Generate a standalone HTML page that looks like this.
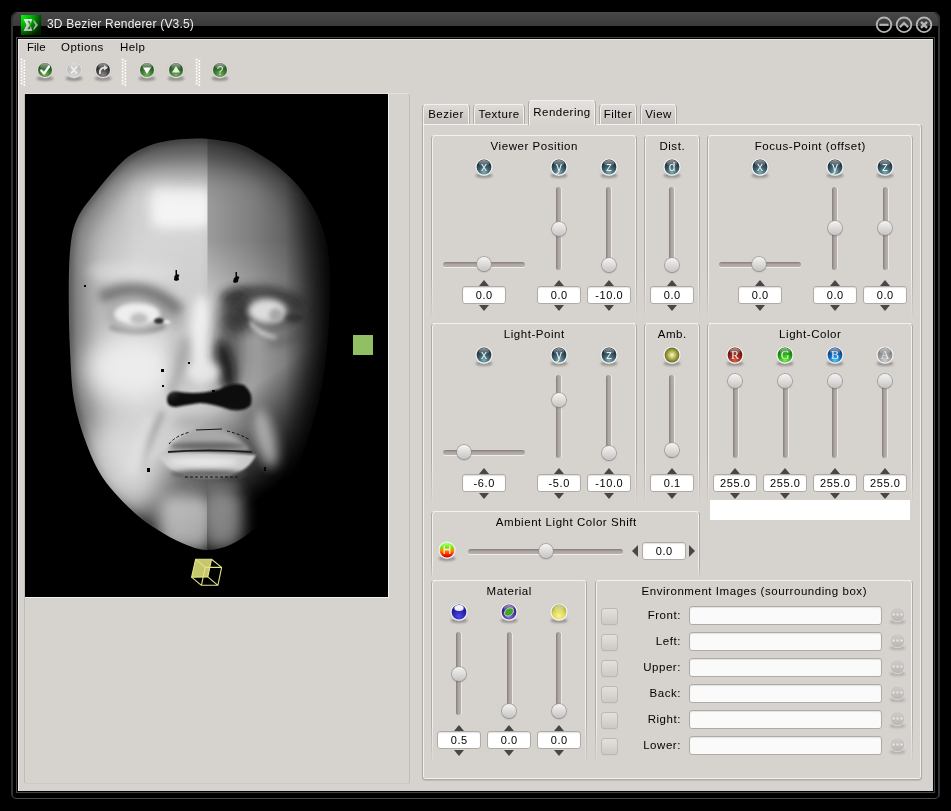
<!DOCTYPE html>
<html><head><meta charset="utf-8"><style>
html,body{margin:0;padding:0;}
body{width:951px;height:811px;background:#000;position:relative;overflow:hidden;font-family:"Liberation Sans",sans-serif;color:#000;}
div{box-sizing:border-box;}
.t{position:absolute;white-space:nowrap;will-change:transform;}
svg text{will-change:transform;}
.gtop{position:absolute;height:4px;border:1px solid #aeaaa6;border-top-color:#f2f1ef;border-bottom:none;border-radius:4px 4px 0 0;box-shadow:inset 1px 0 0 #f2f1ef, inset -1px 0 0 #f2f1ef;}
.gside{position:absolute;width:1px;}
.hgroove{position:absolute;height:5px;border-radius:3px;background:linear-gradient(#857d7a,#aea6a2 50%,#b8b0ac);box-shadow:0 1px 0 rgba(255,255,255,0.6);}
.vgroove{position:absolute;width:5px;border-radius:3px;background:linear-gradient(90deg,#857d7a,#aea6a2 50%,#b8b0ac);box-shadow:1px 0 0 rgba(255,255,255,0.5);}
.handle{position:absolute;width:14px;height:14px;border-radius:50%;background:linear-gradient(#f4f4f3,#c6c4c2);box-shadow:0 0 0 0.8px #9c9894, 0 1px 1.5px rgba(0,0,0,0.35);}
.aup{position:absolute;width:0;height:0;border-left:5.5px solid transparent;border-right:5.5px solid transparent;border-bottom:6px solid #474747;}
.adn{position:absolute;width:0;height:0;border-left:5.5px solid transparent;border-right:5.5px solid transparent;border-top:6px solid #474747;}
.spin{position:absolute;will-change:transform;background:#fff;border:1px solid #b0aba7;border-radius:3px;text-align:center;font-size:11px;letter-spacing:0.6px;text-indent:0.6px;color:#000;box-shadow:inset 0 1px 1px rgba(0,0,0,0.12);}
.tab{position:absolute;will-change:transform;border:1px solid #aeaaa6;border-top-color:#f2f1ef;border-bottom:none;border-radius:4px 4px 0 0;box-shadow:inset 1px 0 0 #f2f1ef, inset -1px 0 0 #f2f1ef;background:linear-gradient(#dbd8d5 10%,#c8c4c0 90%);font-size:11.5px;letter-spacing:0.5px;text-align:center;}
.chk{position:absolute;width:15px;height:15px;border-radius:3px;background:linear-gradient(#e2e0de,#cdc9c5);box-shadow:0 0 0 1px #bcb8b4, 0 1px 1px rgba(0,0,0,0.3);}
.le{position:absolute;background:#fafafa;border:1px solid #b0aba7;border-radius:3px;box-shadow:inset 0 1px 1px rgba(0,0,0,0.1);}
</style></head><body>

<svg width="0" height="0" style="position:absolute"><defs>
<filter id="shb" x="-50%" y="-100%" width="200%" height="300%"><feGaussianBlur stdDeviation="1"/></filter>
<radialGradient id="g_teal" cx="50%" cy="85%" r="75%"><stop offset="0" stop-color="#80b0ac"/><stop offset="0.45" stop-color="#406474"/><stop offset="1" stop-color="#16242e"/></radialGradient>
<radialGradient id="g_red" cx="50%" cy="85%" r="75%"><stop offset="0" stop-color="#e05a40"/><stop offset="0.5" stop-color="#a02818"/><stop offset="1" stop-color="#581008"/></radialGradient>
<radialGradient id="g_green" cx="50%" cy="85%" r="75%"><stop offset="0" stop-color="#80f050"/><stop offset="0.5" stop-color="#28b010"/><stop offset="1" stop-color="#0c6a06"/></radialGradient>
<radialGradient id="g_blue" cx="50%" cy="85%" r="75%"><stop offset="0" stop-color="#50c8f8"/><stop offset="0.5" stop-color="#1670c0"/><stop offset="1" stop-color="#0a3470"/></radialGradient>
<radialGradient id="g_gray" cx="50%" cy="85%" r="75%"><stop offset="0" stop-color="#cfcfcf"/><stop offset="0.5" stop-color="#9c9c9c"/><stop offset="1" stop-color="#777"/></radialGradient>
<radialGradient id="g_olive" cx="50%" cy="50%" r="55%"><stop offset="0" stop-color="#fafad0"/><stop offset="0.45" stop-color="#b8b850"/><stop offset="1" stop-color="#585a20"/></radialGradient>
<linearGradient id="g_hue" x1="0" y1="0" x2="0" y2="1"><stop offset="0" stop-color="#b0ffa0"/><stop offset="0.3" stop-color="#70f000"/><stop offset="0.55" stop-color="#ff8a00"/><stop offset="0.8" stop-color="#ff2000"/><stop offset="1" stop-color="#c00000"/></linearGradient>
<radialGradient id="g_mblue" cx="50%" cy="80%" r="70%"><stop offset="0" stop-color="#4a4ae8"/><stop offset="0.6" stop-color="#2a26b0"/><stop offset="1" stop-color="#16127a"/></radialGradient>
<radialGradient id="g_mpurple" cx="50%" cy="80%" r="70%"><stop offset="0" stop-color="#8a70d0"/><stop offset="0.6" stop-color="#4a30a0"/><stop offset="1" stop-color="#2a1870"/></radialGradient>
<radialGradient id="g_myellow" cx="50%" cy="75%" r="70%"><stop offset="0" stop-color="#fff490"/><stop offset="0.6" stop-color="#d8d858"/><stop offset="1" stop-color="#9a9a30"/></radialGradient>
<radialGradient id="g_tgreen" cx="50%" cy="85%" r="75%"><stop offset="0" stop-color="#78b060"/><stop offset="0.5" stop-color="#3e7a34"/><stop offset="1" stop-color="#1e4a1a"/></radialGradient>
<radialGradient id="g_tdis" cx="50%" cy="85%" r="75%"><stop offset="0" stop-color="#d8d6d4"/><stop offset="1" stop-color="#bab8b6"/></radialGradient>
<radialGradient id="g_tdark" cx="50%" cy="85%" r="75%"><stop offset="0" stop-color="#8a8a8a"/><stop offset="0.5" stop-color="#4a4a4a"/><stop offset="1" stop-color="#222"/></radialGradient>
<linearGradient id="g_btn" x1="0" y1="0" x2="0" y2="1"><stop offset="0" stop-color="#cfccc9"/><stop offset="1" stop-color="#b9b6b3"/></linearGradient>
<linearGradient id="g_hl" x1="0" y1="0" x2="0" y2="1"><stop offset="0" stop-color="#fff" stop-opacity="0.55"/><stop offset="1" stop-color="#fff" stop-opacity="0"/></linearGradient>
</defs></svg>
<div style="position:absolute;left:11px;top:12px;width:929px;height:787px;border:1px solid #4a4a4a;border-left:2px solid #333;border-right:2px solid #333;border-radius:6px 6px 5px 5px;background:#000;"></div>
<div style="position:absolute;left:13px;top:13px;width:925px;height:13px;background:linear-gradient(#474747,#3a3a3a);border-radius:5px 5px 0 0;"></div>
<svg style="position:absolute;left:21px;top:15px" width="20" height="20" viewBox="0 0 20 20">
<defs><radialGradient id="appg" cx="0%" cy="0%" r="120%"><stop offset="0" stop-color="#00ff00"/><stop offset="0.5" stop-color="#00a800"/><stop offset="1" stop-color="#001a00"/></radialGradient>
<linearGradient id="appw" x1="0" y1="0" x2="1" y2="1"><stop offset="0" stop-color="#f8f8f8"/><stop offset="1" stop-color="#a0a0a0"/></linearGradient></defs>
<rect width="20" height="20" fill="url(#appg)"/>
<path d="M2.5 4 L11 4 L11 6 L6.5 6 L9 10 L6.5 14 L11 14 L11 16 L2.5 16 L5.5 10 Z" fill="url(#appw)"/>
<path d="M8 4 L11.5 4 L9.5 10 L11.5 16 L8 16 L10 10 Z" fill="url(#appw)" opacity="0.8"/>
<path d="M12.5 4.5 L17 10 L12.5 15.5 L12.5 13 L14.5 10 L12.5 7 Z" fill="#c8c8c8" opacity="0.8"/>
</svg>
<div class="t" style="left:47px;top:17px;white-space:nowrap;font-size:12px;line-height:14px;letter-spacing:0.2px;color:#eeeeee;">3D Bezier Renderer (V3.5)</div>
<svg style="position:absolute;left:870px;top:12px" width="64" height="26" viewBox="870 12 64 26">
<g stroke="#b4b4b4" fill="none" stroke-width="1.8">
<circle cx="884" cy="24.8" r="7.3"/><circle cx="904" cy="24.8" r="7.3"/><circle cx="924" cy="24.8" r="7.3"/>
<path d="M879.5 24.8 L888.5 24.8" stroke-width="2.2"/>
<path d="M899.8 27.2 L904 23 L908.2 27.2" stroke-width="2.2"/>
<path d="M921 21.8 L927 27.8 M927 21.8 L921 27.8" stroke-width="2.4"/>
</g></svg>
<div style="position:absolute;left:16px;top:37px;width:919px;height:756px;border:1px solid #464646;"></div>
<div style="position:absolute;left:18px;top:39px;width:915px;height:752px;background:#d6d2ce;border-left:1px solid #eceae8;border-top:1px solid #eceae8;"></div>
<div class="t" style="left:26.5px;top:40px;white-space:nowrap;font-size:11.5px;line-height:14px;letter-spacing:0px;">File</div>
<div class="t" style="left:61px;top:40px;white-space:nowrap;font-size:11.5px;line-height:14px;letter-spacing:0.45px;">Options</div>
<div class="t" style="left:120px;top:40px;white-space:nowrap;font-size:11.5px;line-height:14px;letter-spacing:0.45px;">Help</div>
<svg style="position:absolute;left:20px;top:58px" width="6" height="28" viewBox="0 0 6 28"><g fill="#fff"><circle cx="1.6" cy="1.5" r="1"/><circle cx="4.3" cy="3" r="1"/><circle cx="1.6" cy="4.5" r="1"/><circle cx="4.3" cy="6" r="1"/><circle cx="1.6" cy="7.5" r="1"/><circle cx="4.3" cy="9" r="1"/><circle cx="1.6" cy="10.5" r="1"/><circle cx="4.3" cy="12" r="1"/><circle cx="1.6" cy="13.5" r="1"/><circle cx="4.3" cy="15" r="1"/><circle cx="1.6" cy="16.5" r="1"/><circle cx="4.3" cy="18" r="1"/><circle cx="1.6" cy="19.5" r="1"/><circle cx="4.3" cy="21" r="1"/><circle cx="1.6" cy="22.5" r="1"/><circle cx="4.3" cy="24" r="1"/><circle cx="1.6" cy="25.5" r="1"/><circle cx="4.3" cy="27" r="1"/></g></svg>
<svg style="position:absolute;left:121px;top:58px" width="6" height="28" viewBox="0 0 6 28"><g fill="#fff"><circle cx="1.6" cy="1.5" r="1"/><circle cx="4.3" cy="3" r="1"/><circle cx="1.6" cy="4.5" r="1"/><circle cx="4.3" cy="6" r="1"/><circle cx="1.6" cy="7.5" r="1"/><circle cx="4.3" cy="9" r="1"/><circle cx="1.6" cy="10.5" r="1"/><circle cx="4.3" cy="12" r="1"/><circle cx="1.6" cy="13.5" r="1"/><circle cx="4.3" cy="15" r="1"/><circle cx="1.6" cy="16.5" r="1"/><circle cx="4.3" cy="18" r="1"/><circle cx="1.6" cy="19.5" r="1"/><circle cx="4.3" cy="21" r="1"/><circle cx="1.6" cy="22.5" r="1"/><circle cx="4.3" cy="24" r="1"/><circle cx="1.6" cy="25.5" r="1"/><circle cx="4.3" cy="27" r="1"/></g></svg>
<svg style="position:absolute;left:195px;top:58px" width="6" height="28" viewBox="0 0 6 28"><g fill="#fff"><circle cx="1.6" cy="1.5" r="1"/><circle cx="4.3" cy="3" r="1"/><circle cx="1.6" cy="4.5" r="1"/><circle cx="4.3" cy="6" r="1"/><circle cx="1.6" cy="7.5" r="1"/><circle cx="4.3" cy="9" r="1"/><circle cx="1.6" cy="10.5" r="1"/><circle cx="4.3" cy="12" r="1"/><circle cx="1.6" cy="13.5" r="1"/><circle cx="4.3" cy="15" r="1"/><circle cx="1.6" cy="16.5" r="1"/><circle cx="4.3" cy="18" r="1"/><circle cx="1.6" cy="19.5" r="1"/><circle cx="4.3" cy="21" r="1"/><circle cx="1.6" cy="22.5" r="1"/><circle cx="4.3" cy="24" r="1"/><circle cx="1.6" cy="25.5" r="1"/><circle cx="4.3" cy="27" r="1"/></g></svg>
<svg style="position:absolute;left:32.3px;top:56.8px" width="26" height="28" viewBox="0 0 26 28"><ellipse cx="13.0" cy="21.5" rx="8.5" ry="2.6" fill="#000" opacity="0.3" filter="url(#shb)"/><circle cx="13.0" cy="13.0" r="8.3" fill="#e4e2e0" stroke="#bdb9b5" stroke-width="0.6" stroke-opacity="0.6"/><circle cx="13.0" cy="13.0" r="7" fill="url(#g_tgreen)"/><ellipse cx="13.0" cy="9.4" rx="5.0" ry="3.1" fill="url(#g_hl)"/><path d="M9.2 13.5 L12 16.5 L17 9.5" stroke="#fff" stroke-width="2.2" fill="none" stroke-linecap="round" stroke-linejoin="round"/></svg>
<svg style="position:absolute;left:61.3px;top:56.8px" width="26" height="28" viewBox="0 0 26 28"><ellipse cx="13.0" cy="21.5" rx="8.5" ry="2.6" fill="#000" opacity="0.3" filter="url(#shb)"/><circle cx="13.0" cy="13.0" r="8.3" fill="#e4e2e0" stroke="#bdb9b5" stroke-width="0.6" stroke-opacity="0.6"/><circle cx="13.0" cy="13.0" r="7" fill="url(#g_tdis)"/><ellipse cx="13.0" cy="9.4" rx="5.0" ry="3.1" fill="url(#g_hl)"/><path d="M10 9.5 L16 16.5 M16 9.5 L10 16.5" stroke="#f0f0f0" stroke-width="1.6" fill="none"/></svg>
<svg style="position:absolute;left:90.3px;top:56.8px" width="26" height="28" viewBox="0 0 26 28"><ellipse cx="13.0" cy="21.5" rx="8.5" ry="2.6" fill="#000" opacity="0.3" filter="url(#shb)"/><circle cx="13.0" cy="13.0" r="8.3" fill="#e4e2e0" stroke="#bdb9b5" stroke-width="0.6" stroke-opacity="0.6"/><circle cx="13.0" cy="13.0" r="7" fill="url(#g_tdark)"/><ellipse cx="13.0" cy="9.4" rx="5.0" ry="3.1" fill="url(#g_hl)"/><path d="M10 17 Q9 11 15 10.5" stroke="#e0e0e0" stroke-width="2" fill="none"/><path d="M14 8 L18 10.8 L14 13.5 Z" fill="#e0e0e0"/></svg>
<svg style="position:absolute;left:134.2px;top:56.8px" width="26" height="28" viewBox="0 0 26 28"><ellipse cx="13.0" cy="21.5" rx="8.5" ry="2.6" fill="#000" opacity="0.3" filter="url(#shb)"/><circle cx="13.0" cy="13.0" r="8.3" fill="#e4e2e0" stroke="#bdb9b5" stroke-width="0.6" stroke-opacity="0.6"/><circle cx="13.0" cy="13.0" r="7" fill="url(#g_tgreen)"/><ellipse cx="13.0" cy="9.4" rx="5.0" ry="3.1" fill="url(#g_hl)"/><path d="M9 10.5 L17 10.5 L13 17 Z" fill="#fff"/></svg>
<svg style="position:absolute;left:163.3px;top:56.8px" width="26" height="28" viewBox="0 0 26 28"><ellipse cx="13.0" cy="21.5" rx="8.5" ry="2.6" fill="#000" opacity="0.3" filter="url(#shb)"/><circle cx="13.0" cy="13.0" r="8.3" fill="#e4e2e0" stroke="#bdb9b5" stroke-width="0.6" stroke-opacity="0.6"/><circle cx="13.0" cy="13.0" r="7" fill="url(#g_tgreen)"/><ellipse cx="13.0" cy="9.4" rx="5.0" ry="3.1" fill="url(#g_hl)"/><path d="M9 15.5 L17 15.5 L13 9 Z" fill="#e8f0e8"/></svg>
<svg style="position:absolute;left:207.0px;top:56.8px" width="26" height="28" viewBox="0 0 26 28"><ellipse cx="13.0" cy="21.5" rx="8.5" ry="2.6" fill="#000" opacity="0.3" filter="url(#shb)"/><circle cx="13.0" cy="13.0" r="8.3" fill="#e4e2e0" stroke="#bdb9b5" stroke-width="0.6" stroke-opacity="0.6"/><circle cx="13.0" cy="13.0" r="7" fill="url(#g_tgreen)"/><ellipse cx="13.0" cy="9.4" rx="5.0" ry="3.1" fill="url(#g_hl)"/><text x="13" y="17.5" text-anchor="middle" font-family="Liberation Sans" font-size="12" fill="#d8e8d0">?</text></svg>
<div style="position:absolute;left:24px;top:93px;width:386px;height:691px;border:1px solid #bfbbb7;border-top-color:#e4e2e0;border-bottom-color:#cdc9c5;border-radius:3px;"></div>
<svg style="position:absolute;left:25px;top:94px" width="363" height="503" viewBox="25 94 363 503">
<defs>
<mask id="hm" maskUnits="userSpaceOnUse" x="0" y="0" width="420" height="700"><path d="M208.0,139.0 C216.2,139.9 230.5,141.5 239.0,144.0 C247.5,146.5 252.3,150.1 259.0,154.0 C265.7,157.9 272.3,162.0 279.0,167.5 C285.7,173.0 293.2,180.1 299.0,187.0 C304.8,193.9 309.8,201.3 314.0,209.0 C318.2,216.7 321.5,224.5 324.0,233.0 C326.5,241.5 328.0,249.7 329.0,260.0 C330.0,270.3 330.2,282.5 330.0,295.0 C329.8,307.5 329.2,320.8 328.0,335.0 C326.8,349.2 325.5,365.5 323.0,380.0 C320.5,394.5 316.8,408.7 313.0,422.0 C309.2,435.3 305.2,447.8 300.0,460.0 C294.8,472.2 289.0,484.2 282.0,495.0 C275.0,505.8 266.3,516.8 258.0,525.0 C249.7,533.2 240.7,539.8 232.0,544.0 C223.3,548.2 214.3,550.2 206.0,550.0 C197.7,549.8 190.0,546.3 182.0,543.0 C174.0,539.7 166.1,535.2 158.0,530.0 C149.9,524.8 142.6,520.4 133.6,512.0 C124.6,503.6 111.8,490.8 104.0,479.5 C96.2,468.2 91.5,457.2 86.5,444.0 C81.5,430.8 76.8,415.7 74.0,400.0 C71.2,384.3 70.9,366.7 70.0,350.0 C69.1,333.3 68.8,317.0 68.8,300.0 C68.8,283.0 68.8,261.7 70.3,248.0 C71.8,234.3 72.9,227.8 77.6,218.0 C82.3,208.2 90.4,198.8 98.3,189.0 C106.2,179.2 116.5,166.7 124.8,159.5 C133.1,152.3 140.8,149.2 148.3,146.0 C155.8,142.8 163.1,141.7 170.0,140.5 C176.9,139.3 183.7,139.1 190.0,138.8 C196.3,138.6 199.8,138.1 208.0,139.0 Z" fill="#fff"/></mask>
<clipPath id="lh"><rect x="0" y="0" width="207.5" height="811"/></clipPath>
<clipPath id="rh"><rect x="207.5" y="0" width="400" height="811"/></clipPath>
<filter id="b1" filterUnits="userSpaceOnUse" x="0" y="0" width="420" height="700"><feGaussianBlur stdDeviation="1"/></filter><filter id="b2" filterUnits="userSpaceOnUse" x="0" y="0" width="420" height="700"><feGaussianBlur stdDeviation="2"/></filter><filter id="b3" filterUnits="userSpaceOnUse" x="0" y="0" width="420" height="700"><feGaussianBlur stdDeviation="3"/></filter><filter id="b4" filterUnits="userSpaceOnUse" x="0" y="0" width="420" height="700"><feGaussianBlur stdDeviation="4"/></filter><filter id="b5" filterUnits="userSpaceOnUse" x="0" y="0" width="420" height="700"><feGaussianBlur stdDeviation="5"/></filter><filter id="b6" filterUnits="userSpaceOnUse" x="0" y="0" width="420" height="700"><feGaussianBlur stdDeviation="6"/></filter><filter id="b8" filterUnits="userSpaceOnUse" x="0" y="0" width="420" height="700"><feGaussianBlur stdDeviation="8"/></filter><filter id="b12" filterUnits="userSpaceOnUse" x="0" y="0" width="420" height="700"><feGaussianBlur stdDeviation="12"/></filter><filter id="b16" filterUnits="userSpaceOnUse" x="0" y="0" width="420" height="700"><feGaussianBlur stdDeviation="16"/></filter>
<linearGradient id="gh" gradientUnits="userSpaceOnUse" x1="70" y1="0" x2="330" y2="0">
<stop offset="0" stop-color="#b0b0b0"/><stop offset="0.25" stop-color="#d2d2d2"/><stop offset="0.5" stop-color="#cdcdcd"/><stop offset="0.7" stop-color="#a2a2a2"/><stop offset="0.88" stop-color="#707070"/><stop offset="1" stop-color="#3c3c3c"/></linearGradient>
<linearGradient id="fl" gradientUnits="userSpaceOnUse" x1="0" y1="240" x2="0" y2="300">
<stop offset="0" stop-color="#fff" stop-opacity="0.12"/><stop offset="1" stop-color="#fff" stop-opacity="0"/></linearGradient>
<linearGradient id="fr" gradientUnits="userSpaceOnUse" x1="0" y1="240" x2="0" y2="300">
<stop offset="0" stop-color="#000" stop-opacity="0.22"/><stop offset="1" stop-color="#000" stop-opacity="0"/></linearGradient>
<linearGradient id="cl" gradientUnits="userSpaceOnUse" x1="0" y1="482" x2="0" y2="510">
<stop offset="0" stop-color="#fff" stop-opacity="0"/><stop offset="1" stop-color="#fff" stop-opacity="0.12"/></linearGradient>
<linearGradient id="cr" gradientUnits="userSpaceOnUse" x1="0" y1="482" x2="0" y2="510">
<stop offset="0" stop-color="#000" stop-opacity="0"/><stop offset="1" stop-color="#000" stop-opacity="0.12"/></linearGradient>
<linearGradient id="redge" gradientUnits="userSpaceOnUse" x1="285" y1="0" x2="332" y2="0">
<stop offset="0" stop-color="#000" stop-opacity="0"/><stop offset="1" stop-color="#000" stop-opacity="0.75"/></linearGradient>
<linearGradient id="rdark" gradientUnits="userSpaceOnUse" x1="240" y1="395" x2="295" y2="475">
<stop offset="0" stop-color="#000" stop-opacity="0"/><stop offset="0.45" stop-color="#000" stop-opacity="0.5"/><stop offset="1" stop-color="#000" stop-opacity="1"/></linearGradient>
</defs>
<rect x="25" y="94" width="363" height="503" fill="#000"/>
<g mask="url(#hm)">
 <rect x="25" y="94" width="363" height="503" fill="url(#gh)"/>
 <!-- forehead split -->
 <g clip-path="url(#lh)"><rect x="25" y="94" width="363" height="210" fill="url(#fl)"/>
   <rect x="150" y="186" width="62" height="42" rx="10" fill="#f8f8f8" filter="url(#b6)" opacity="0.9"/>
   <rect x="25" y="480" width="363" height="120" fill="url(#cl)"/>
 </g>
 <g clip-path="url(#rh)"><rect x="25" y="94" width="363" height="210" fill="url(#fr)"/>
   <rect x="25" y="480" width="363" height="120" fill="url(#cr)"/>
 </g>
 <rect x="25" y="94" width="363" height="503" fill="url(#rdark)"/>
 <rect x="25" y="180" width="363" height="300" fill="url(#redge)"/>
 <path d="M208.0,139.0 C216.2,139.9 230.5,141.5 239.0,144.0 C247.5,146.5 252.3,150.1 259.0,154.0 C265.7,157.9 272.3,162.0 279.0,167.5 C285.7,173.0 293.2,180.1 299.0,187.0 C304.8,193.9 309.8,201.3 314.0,209.0 C318.2,216.7 321.5,224.5 324.0,233.0 C326.5,241.5 328.0,249.7 329.0,260.0 C330.0,270.3 330.2,282.5 330.0,295.0 C329.8,307.5 329.2,320.8 328.0,335.0 C326.8,349.2 325.5,365.5 323.0,380.0 C320.5,394.5 316.8,408.7 313.0,422.0 C309.2,435.3 305.2,447.8 300.0,460.0 C294.8,472.2 289.0,484.2 282.0,495.0 C275.0,505.8 266.3,516.8 258.0,525.0 C249.7,533.2 240.7,539.8 232.0,544.0 C223.3,548.2 214.3,550.2 206.0,550.0 C197.7,549.8 190.0,546.3 182.0,543.0 C174.0,539.7 166.1,535.2 158.0,530.0 C149.9,524.8 142.6,520.4 133.6,512.0 C124.6,503.6 111.8,490.8 104.0,479.5 C96.2,468.2 91.5,457.2 86.5,444.0 C81.5,430.8 76.8,415.7 74.0,400.0 C71.2,384.3 70.9,366.7 70.0,350.0 C69.1,333.3 68.8,317.0 68.8,300.0 C68.8,283.0 68.8,261.7 70.3,248.0 C71.8,234.3 72.9,227.8 77.6,218.0 C82.3,208.2 90.4,198.8 98.3,189.0 C106.2,179.2 116.5,166.7 124.8,159.5 C133.1,152.3 140.8,149.2 148.3,146.0 C155.8,142.8 163.1,141.7 170.0,140.5 C176.9,139.3 183.7,139.1 190.0,138.8 C196.3,138.6 199.8,138.1 208.0,139.0 Z" stroke="#000" stroke-width="30" fill="none" filter="url(#b12)" opacity="0.38"/>
 <ellipse cx="195" cy="138" rx="120" ry="34" fill="#000" filter="url(#b16)" opacity="0.42"/>
 <ellipse cx="110" cy="200" rx="30" ry="50" fill="#000" filter="url(#b16)" opacity="0.08"/>
 <path d="M208.0,139.0 C216.2,139.9 230.5,141.5 239.0,144.0 C247.5,146.5 252.3,150.1 259.0,154.0 C265.7,157.9 272.3,162.0 279.0,167.5 C285.7,173.0 293.2,180.1 299.0,187.0 C304.8,193.9 309.8,201.3 314.0,209.0 C318.2,216.7 321.5,224.5 324.0,233.0 C326.5,241.5 328.0,249.7 329.0,260.0 C330.0,270.3 330.2,282.5 330.0,295.0 C329.8,307.5 329.2,320.8 328.0,335.0 C326.8,349.2 325.5,365.5 323.0,380.0 C320.5,394.5 316.8,408.7 313.0,422.0 C309.2,435.3 305.2,447.8 300.0,460.0 C294.8,472.2 289.0,484.2 282.0,495.0 C275.0,505.8 266.3,516.8 258.0,525.0 C249.7,533.2 240.7,539.8 232.0,544.0 C223.3,548.2 214.3,550.2 206.0,550.0 C197.7,549.8 190.0,546.3 182.0,543.0 C174.0,539.7 166.1,535.2 158.0,530.0 C149.9,524.8 142.6,520.4 133.6,512.0 C124.6,503.6 111.8,490.8 104.0,479.5 C96.2,468.2 91.5,457.2 86.5,444.0 C81.5,430.8 76.8,415.7 74.0,400.0 C71.2,384.3 70.9,366.7 70.0,350.0 C69.1,333.3 68.8,317.0 68.8,300.0 C68.8,283.0 68.8,261.7 70.3,248.0 C71.8,234.3 72.9,227.8 77.6,218.0 C82.3,208.2 90.4,198.8 98.3,189.0 C106.2,179.2 116.5,166.7 124.8,159.5 C133.1,152.3 140.8,149.2 148.3,146.0 C155.8,142.8 163.1,141.7 170.0,140.5 C176.9,139.3 183.7,139.1 190.0,138.8 C196.3,138.6 199.8,138.1 208.0,139.0 Z" stroke="#000" stroke-width="6" fill="none" filter="url(#b3)" opacity="0.35"/>
 <!-- brow ridge bright -->
 <ellipse cx="132" cy="272" rx="45" ry="9" fill="#e2e2e2" filter="url(#b6)" opacity="0.6"/>
 <!-- brow / socket shadow -->
 <path d="M100 298 Q145 276 180 312" stroke="#5a5a5a" stroke-width="13" fill="none" filter="url(#b5)" opacity="0.75"/>
 <path d="M222 300 Q262 280 305 306" stroke="#2a2a2a" stroke-width="12" fill="none" filter="url(#b5)" opacity="0.7"/>
 <ellipse cx="238" cy="312" rx="17" ry="22" fill="#121212" filter="url(#b6)" opacity="0.65"/>
 <ellipse cx="140" cy="314" rx="34" ry="17" fill="#6a6a6a" filter="url(#b6)" opacity="0.35"/>
 <ellipse cx="270" cy="312" rx="34" ry="18" fill="#1a1a1a" filter="url(#b6)" opacity="0.4"/>
 <!-- left eye -->
 <ellipse cx="137" cy="314" rx="23" ry="11" fill="#eeeeee" filter="url(#b2)"/>
 <ellipse cx="139" cy="319" rx="9" ry="6" fill="#bcbcbc" filter="url(#b2)"/>
 <ellipse cx="159" cy="321" rx="5" ry="3" fill="#1e1e1e" filter="url(#b1)" opacity="0.9"/>
 <ellipse cx="167" cy="322" rx="3.5" ry="2" fill="#f2f2f2" filter="url(#b1)"/>
 <path d="M110 327 Q138 338 165 326" stroke="#7a7a7a" stroke-width="5" fill="none" filter="url(#b2)" opacity="0.8"/>
 <ellipse cx="177" cy="320" rx="6" ry="12" fill="#8a8a8a" filter="url(#b6)" opacity="0.5"/>
 <!-- bright cheek left -->
 <ellipse cx="130" cy="368" rx="45" ry="32" fill="#f0f0f0" filter="url(#b12)" opacity="0.9"/>
 <!-- right eye -->
 <ellipse cx="267" cy="311" rx="19" ry="12" fill="#dcdcdc" filter="url(#b3)"/>
 <ellipse cx="276" cy="315" rx="7" ry="7" fill="#a8a8a8" filter="url(#b2)"/>
 <ellipse cx="295" cy="318" rx="10" ry="4" fill="#2a2a2a" filter="url(#b2)" opacity="0.7"/>
 <path d="M250 322 Q258 334 276 338" stroke="#dcdcdc" stroke-width="4" fill="none" filter="url(#b2)" opacity="0.85"/>
 <path d="M268 342 Q288 345 305 332" stroke="#3a3a3a" stroke-width="6" fill="none" filter="url(#b4)" opacity="0.45"/>
 <!-- nose bridge -->
 <ellipse cx="201" cy="335" rx="10" ry="40" fill="#f0f0f0" filter="url(#b4)" opacity="0.95"/>
 <ellipse cx="229" cy="352" rx="14" ry="40" fill="#1a1a1a" filter="url(#b8)" opacity="0.55"/>
 <ellipse cx="226" cy="366" rx="8" ry="26" transform="rotate(-12 226 366)" fill="#0a0a0a" filter="url(#b4)" opacity="0.8"/>
 <ellipse cx="180" cy="362" rx="8" ry="26" fill="#8a8a8a" filter="url(#b8)" opacity="0.45"/>
 <!-- nose tip -->
 <ellipse cx="203" cy="372" rx="17" ry="11" fill="#e8e8e8" filter="url(#b4)" opacity="0.9"/>
 <ellipse cx="180" cy="385" rx="12" ry="9" fill="#c8c8c8" filter="url(#b3)" opacity="0.6"/>
 <!-- nostrils -->
 <path d="M167 398 Q169 389 180 392 Q200 395 220 389 Q232 382 244 385 Q254 393 251 405 Q246 412 230 410 Q214 404 200 403 Q186 405 176 407 Q166 407 167 398 Z" fill="#101010" filter="url(#b1)"/>
 <path d="M186 338 Q182 370 169 396" stroke="#8c8c8c" stroke-width="6" fill="none" filter="url(#b4)" opacity="0.6"/>
 
 <ellipse cx="205" cy="418" rx="32" ry="6" fill="#c4c4c4" filter="url(#b4)" opacity="0.4"/>
 <ellipse cx="210" cy="424" rx="38" ry="8" fill="#8a8a8a" filter="url(#b6)" opacity="0.45"/>
 <!-- nasolabial folds -->
 <path d="M163 412 Q148 440 142 472" stroke="#8a8a8a" stroke-width="5" fill="none" filter="url(#b3)" opacity="0.7"/>
 <path d="M150 416 Q136 445 131 472" stroke="#f0f0f0" stroke-width="5" fill="none" filter="url(#b4)" opacity="0.6"/>
 <path d="M252 412 Q264 440 270 470" stroke="#2a2a2a" stroke-width="7" fill="none" filter="url(#b4)" opacity="0.5"/>
 <!-- upper lip -->
 <path d="M168 451 Q184 428 208 428 Q232 428 251 451 Z" fill="#a8a8a8" filter="url(#b2)"/>
 <ellipse cx="208" cy="446" rx="38" ry="4" fill="#5a5a5a" filter="url(#b2)" opacity="0.8"/>
 <path d="M168 452 Q208 449 252 452" stroke="#1a1a1a" stroke-width="2" fill="none"/>
 <!-- lower lip -->
 <path d="M158 455 Q180 453 208 453 Q236 453 256 455 Q246 478 208 478 Q170 478 158 455 Z" fill="#cacaca" filter="url(#b1)"/>
 <ellipse cx="203" cy="462" rx="36" ry="5" fill="#ececec" filter="url(#b3)" opacity="0.9"/>
 <ellipse cx="208" cy="474" rx="38" ry="4" fill="#505050" filter="url(#b2)" opacity="0.8"/>
 <ellipse cx="208" cy="485" rx="34" ry="6" fill="#6a6a6a" filter="url(#b4)" opacity="0.55"/>
 <ellipse cx="122" cy="468" rx="30" ry="48" transform="rotate(-30 122 468)" fill="#e2e2e2" filter="url(#b12)" opacity="0.75"/>

 <ellipse cx="265" cy="438" rx="10" ry="30" transform="rotate(-15 265 438)" fill="#d0d0d0" filter="url(#b6)" opacity="0.75"/>
 <ellipse cx="222" cy="515" rx="16" ry="22" fill="#8a8a8a" filter="url(#b8)" opacity="0.5"/>
 <g clip-path="url(#lh)"><rect x="158" y="494" width="56" height="58" rx="16" fill="#e0e0e0" filter="url(#b8)" opacity="0.75"/></g>
 <g clip-path="url(#rh)"><rect x="200" y="488" width="42" height="62" rx="16" fill="#959595" filter="url(#b8)" opacity="0.8"/></g>
</g>
<g fill="#050505">
 <path d="M175.5,270 L177,270 L177,274 L179.5,275 L178.5,277 L179,280 L176,281 L174,280 L174.5,276 L175.5,275 Z"/>
 <path d="M235.5,272 L237,272 L237,276 L239.5,277 L238.5,279 L238,282 L235,283 L233,282 L234,278 L235.5,277 Z"/>
 <rect x="84" y="285" width="2" height="2"/>
 <rect x="161" y="369" width="3" height="3"/>
 <rect x="188" y="362" width="2" height="2"/>
 <rect x="147" y="468" width="3" height="4"/>
 <rect x="264" y="467" width="2" height="4"/>
 <rect x="212" y="390" width="3" height="2"/>
 <rect x="162" y="385" width="2" height="2"/>
</g>
<g stroke="#101010" stroke-width="1" fill="none" stroke-dasharray="3 2">
 <path d="M169 444 Q175 436 190 432"/>
 <path d="M227 431 Q240 434 250 440"/>
 <path d="M185 477 L240 477"/>
</g>
<path d="M196 430 L222 429" stroke="#151515" stroke-width="1.2"/>
<rect x="353" y="335" width="20" height="20" fill="#90c063"/>
<g stroke="#e4e488" stroke-width="1.1" fill="none" stroke-linejoin="round">
<path d="M195.6,559.3 L211.5,559.3 L207.8,576.9 L191.6,577.2 Z" fill="#c6c66c"/>
<path d="M195.6,559.3 L205.2,567.4 L221.6,567.4 L211.5,559.3 M221.6,567.4 L217.9,585.3 L201.4,585.3 L191.6,577.2 M205.2,567.4 L201.4,585.3 M207.8,576.9 L217.9,585.3"/>
</g>
</svg>
<div style="position:absolute;left:388px;top:94px;width:1px;height:503px;background:#f2f1ef;"></div>
<div style="position:absolute;left:25px;top:597px;width:364px;height:1px;background:#f2f1ef;"></div>
<div style="position:absolute;left:422px;top:124px;width:500px;height:656px;border:1px solid #aeaaa6;border-top-color:#f2f1ef;border-radius:0 4px 4px 4px;box-shadow:inset 1px 0 0 #f2f1ef, inset -1px 0 0 #f2f1ef, inset 0 -1px 0 #f2f1ef, 0 1px 1px rgba(0,0,0,0.12);"></div>
<div class="tab" style="left:422px;top:104px;width:48px;height:20px;line-height:18px;">Bezier</div>
<div class="tab" style="left:473px;top:104px;width:52px;height:20px;line-height:18px;">Texture</div>
<div class="tab" style="left:528px;top:100px;width:68px;height:25px;background:linear-gradient(#e4e1de,#d6d2ce);line-height:22px;">Rendering</div>
<div class="tab" style="left:599px;top:104px;width:38px;height:20px;line-height:18px;">Filter</div>
<div class="tab" style="left:640px;top:104px;width:37px;height:20px;line-height:18px;">View</div>
<div class="gtop" style="left:431px;top:135px;width:206px;"></div>
<div class="gside" style="left:431px;top:139px;height:177px;background:linear-gradient(#aeaaa6 136px, rgba(174,170,166,0) 181px);"></div>
<div class="gside" style="left:432px;top:139px;height:177px;background:linear-gradient(#f2f1ef 136px, rgba(242,241,239,0) 181px);"></div>
<div class="gside" style="left:635px;top:139px;height:177px;background:linear-gradient(#f2f1ef 136px, rgba(242,241,239,0) 181px);"></div>
<div class="gside" style="left:636px;top:139px;height:177px;background:linear-gradient(#aeaaa6 136px, rgba(174,170,166,0) 181px);"></div>
<div class="t" style="left:384.0px;top:139px;width:300px;text-align:center;font-size:11.5px;line-height:14px;letter-spacing:0.55px;text-indent:0.55px;">Viewer Position</div>
<div class="gtop" style="left:644px;top:135px;width:56px;"></div>
<div class="gside" style="left:644px;top:139px;height:177px;background:linear-gradient(#aeaaa6 136px, rgba(174,170,166,0) 181px);"></div>
<div class="gside" style="left:645px;top:139px;height:177px;background:linear-gradient(#f2f1ef 136px, rgba(242,241,239,0) 181px);"></div>
<div class="gside" style="left:698px;top:139px;height:177px;background:linear-gradient(#f2f1ef 136px, rgba(242,241,239,0) 181px);"></div>
<div class="gside" style="left:699px;top:139px;height:177px;background:linear-gradient(#aeaaa6 136px, rgba(174,170,166,0) 181px);"></div>
<div class="t" style="left:522.0px;top:139px;width:300px;text-align:center;font-size:11.5px;line-height:14px;letter-spacing:0.55px;text-indent:0.55px;">Dist.</div>
<div class="gtop" style="left:707px;top:135px;width:206px;"></div>
<div class="gside" style="left:707px;top:139px;height:177px;background:linear-gradient(#aeaaa6 136px, rgba(174,170,166,0) 181px);"></div>
<div class="gside" style="left:708px;top:139px;height:177px;background:linear-gradient(#f2f1ef 136px, rgba(242,241,239,0) 181px);"></div>
<div class="gside" style="left:911px;top:139px;height:177px;background:linear-gradient(#f2f1ef 136px, rgba(242,241,239,0) 181px);"></div>
<div class="gside" style="left:912px;top:139px;height:177px;background:linear-gradient(#aeaaa6 136px, rgba(174,170,166,0) 181px);"></div>
<div class="t" style="left:660.0px;top:139px;width:300px;text-align:center;font-size:11.5px;line-height:14px;letter-spacing:0.55px;text-indent:0.55px;">Focus-Point (offset)</div>
<div class="gtop" style="left:431px;top:323px;width:206px;"></div>
<div class="gside" style="left:431px;top:327px;height:175px;background:linear-gradient(#aeaaa6 134px, rgba(174,170,166,0) 179px);"></div>
<div class="gside" style="left:432px;top:327px;height:175px;background:linear-gradient(#f2f1ef 134px, rgba(242,241,239,0) 179px);"></div>
<div class="gside" style="left:635px;top:327px;height:175px;background:linear-gradient(#f2f1ef 134px, rgba(242,241,239,0) 179px);"></div>
<div class="gside" style="left:636px;top:327px;height:175px;background:linear-gradient(#aeaaa6 134px, rgba(174,170,166,0) 179px);"></div>
<div class="t" style="left:384.0px;top:327px;width:300px;text-align:center;font-size:11.5px;line-height:14px;letter-spacing:0.55px;text-indent:0.55px;">Light-Point</div>
<div class="gtop" style="left:644px;top:323px;width:56px;"></div>
<div class="gside" style="left:644px;top:327px;height:175px;background:linear-gradient(#aeaaa6 134px, rgba(174,170,166,0) 179px);"></div>
<div class="gside" style="left:645px;top:327px;height:175px;background:linear-gradient(#f2f1ef 134px, rgba(242,241,239,0) 179px);"></div>
<div class="gside" style="left:698px;top:327px;height:175px;background:linear-gradient(#f2f1ef 134px, rgba(242,241,239,0) 179px);"></div>
<div class="gside" style="left:699px;top:327px;height:175px;background:linear-gradient(#aeaaa6 134px, rgba(174,170,166,0) 179px);"></div>
<div class="t" style="left:522.0px;top:327px;width:300px;text-align:center;font-size:11.5px;line-height:14px;letter-spacing:0.55px;text-indent:0.55px;">Amb.</div>
<div class="gtop" style="left:707px;top:323px;width:206px;"></div>
<div class="gside" style="left:707px;top:327px;height:175px;background:linear-gradient(#aeaaa6 134px, rgba(174,170,166,0) 179px);"></div>
<div class="gside" style="left:708px;top:327px;height:175px;background:linear-gradient(#f2f1ef 134px, rgba(242,241,239,0) 179px);"></div>
<div class="gside" style="left:911px;top:327px;height:175px;background:linear-gradient(#f2f1ef 134px, rgba(242,241,239,0) 179px);"></div>
<div class="gside" style="left:912px;top:327px;height:175px;background:linear-gradient(#aeaaa6 134px, rgba(174,170,166,0) 179px);"></div>
<div class="t" style="left:660.0px;top:327px;width:300px;text-align:center;font-size:11.5px;line-height:14px;letter-spacing:0.55px;text-indent:0.55px;">Light-Color</div>
<div class="gtop" style="left:431px;top:511px;width:269px;"></div>
<div class="gside" style="left:431px;top:515px;height:61px;background:linear-gradient(#aeaaa6 49px, rgba(174,170,166,0) 65px);"></div>
<div class="gside" style="left:432px;top:515px;height:61px;background:linear-gradient(#f2f1ef 49px, rgba(242,241,239,0) 65px);"></div>
<div class="gside" style="left:698px;top:515px;height:61px;background:linear-gradient(#f2f1ef 49px, rgba(242,241,239,0) 65px);"></div>
<div class="gside" style="left:699px;top:515px;height:61px;background:linear-gradient(#aeaaa6 49px, rgba(174,170,166,0) 65px);"></div>
<div class="t" style="left:415.5px;top:515px;width:300px;text-align:center;font-size:11.5px;line-height:14px;letter-spacing:0.55px;text-indent:0.55px;">Ambient Light Color Shift</div>
<div class="gtop" style="left:431px;top:580px;width:156px;"></div>
<div class="gside" style="left:431px;top:584px;height:178px;background:linear-gradient(#aeaaa6 136px, rgba(174,170,166,0) 182px);"></div>
<div class="gside" style="left:432px;top:584px;height:178px;background:linear-gradient(#f2f1ef 136px, rgba(242,241,239,0) 182px);"></div>
<div class="gside" style="left:585px;top:584px;height:178px;background:linear-gradient(#f2f1ef 136px, rgba(242,241,239,0) 182px);"></div>
<div class="gside" style="left:586px;top:584px;height:178px;background:linear-gradient(#aeaaa6 136px, rgba(174,170,166,0) 182px);"></div>
<div class="t" style="left:359.0px;top:584px;width:300px;text-align:center;font-size:11.5px;line-height:14px;letter-spacing:0.55px;text-indent:0.55px;">Material</div>
<div class="gtop" style="left:595px;top:580px;width:318px;"></div>
<div class="gside" style="left:595px;top:584px;height:178px;background:linear-gradient(#aeaaa6 136px, rgba(174,170,166,0) 182px);"></div>
<div class="gside" style="left:596px;top:584px;height:178px;background:linear-gradient(#f2f1ef 136px, rgba(242,241,239,0) 182px);"></div>
<div class="gside" style="left:911px;top:584px;height:178px;background:linear-gradient(#f2f1ef 136px, rgba(242,241,239,0) 182px);"></div>
<div class="gside" style="left:912px;top:584px;height:178px;background:linear-gradient(#aeaaa6 136px, rgba(174,170,166,0) 182px);"></div>
<div class="t" style="left:604.0px;top:584px;width:300px;text-align:center;font-size:11.5px;line-height:14px;letter-spacing:0.55px;text-indent:0.55px;">Environment Images (sourrounding box)</div>
<svg style="position:absolute;left:471.0px;top:154.0px" width="26" height="28" viewBox="0 0 26 28"><ellipse cx="13.0" cy="21.5" rx="8.5" ry="2.6" fill="#000" opacity="0.3" filter="url(#shb)"/><circle cx="13.0" cy="13.0" r="9" fill="#f2f2f2" stroke="#bdb9b5" stroke-width="0.6" stroke-opacity="0.6"/><circle cx="13.0" cy="13.0" r="7.4" fill="url(#g_teal)"/><ellipse cx="13.0" cy="9.4" rx="5.3" ry="3.3" fill="url(#g_hl)"/><text x="13.0" y="17.2" text-anchor="middle" font-family="Liberation Sans" font-size="12" fill="#e8f0f0">x</text></svg>
<svg style="position:absolute;left:546.0px;top:154.0px" width="26" height="28" viewBox="0 0 26 28"><ellipse cx="13.0" cy="21.5" rx="8.5" ry="2.6" fill="#000" opacity="0.3" filter="url(#shb)"/><circle cx="13.0" cy="13.0" r="9" fill="#f2f2f2" stroke="#bdb9b5" stroke-width="0.6" stroke-opacity="0.6"/><circle cx="13.0" cy="13.0" r="7.4" fill="url(#g_teal)"/><ellipse cx="13.0" cy="9.4" rx="5.3" ry="3.3" fill="url(#g_hl)"/><text x="13.0" y="17.2" text-anchor="middle" font-family="Liberation Sans" font-size="12" fill="#e8f0f0">y</text></svg>
<svg style="position:absolute;left:596.0px;top:154.0px" width="26" height="28" viewBox="0 0 26 28"><ellipse cx="13.0" cy="21.5" rx="8.5" ry="2.6" fill="#000" opacity="0.3" filter="url(#shb)"/><circle cx="13.0" cy="13.0" r="9" fill="#f2f2f2" stroke="#bdb9b5" stroke-width="0.6" stroke-opacity="0.6"/><circle cx="13.0" cy="13.0" r="7.4" fill="url(#g_teal)"/><ellipse cx="13.0" cy="9.4" rx="5.3" ry="3.3" fill="url(#g_hl)"/><text x="13.0" y="17.2" text-anchor="middle" font-family="Liberation Sans" font-size="12" fill="#e8f0f0">z</text></svg>
<div class="hgroove" style="left:443px;top:261.8px;width:82px"></div>
<div class="handle" style="left:476.5px;top:257.3px"></div>
<div class="vgroove" style="left:556.0px;top:187px;height:83px"></div>
<div class="handle" style="left:551.5px;top:221.5px"></div>
<div class="vgroove" style="left:606.0px;top:187px;height:83px"></div>
<div class="handle" style="left:601.5px;top:258px"></div>
<div class="aup" style="left:478.5px;top:280px"></div>
<div class="adn" style="left:478.5px;top:305px"></div>
<div class="spin" style="left:462px;top:286px;width:44px;height:18px;line-height:17px">0.0</div>
<div class="aup" style="left:553.5px;top:280px"></div>
<div class="adn" style="left:553.5px;top:305px"></div>
<div class="spin" style="left:537px;top:286px;width:44px;height:18px;line-height:17px">0.0</div>
<div class="aup" style="left:603.5px;top:280px"></div>
<div class="adn" style="left:603.5px;top:305px"></div>
<div class="spin" style="left:587px;top:286px;width:44px;height:18px;line-height:17px">-10.0</div>
<svg style="position:absolute;left:659.0px;top:154.0px" width="26" height="28" viewBox="0 0 26 28"><ellipse cx="13.0" cy="21.5" rx="8.5" ry="2.6" fill="#000" opacity="0.3" filter="url(#shb)"/><circle cx="13.0" cy="13.0" r="9" fill="#f2f2f2" stroke="#bdb9b5" stroke-width="0.6" stroke-opacity="0.6"/><circle cx="13.0" cy="13.0" r="7.4" fill="url(#g_teal)"/><ellipse cx="13.0" cy="9.4" rx="5.3" ry="3.3" fill="url(#g_hl)"/><text x="13.0" y="17.2" text-anchor="middle" font-family="Liberation Sans" font-size="12" fill="#e8f0f0">d</text></svg>
<div class="vgroove" style="left:669.0px;top:187px;height:82px"></div>
<div class="handle" style="left:664.5px;top:258px"></div>
<div class="aup" style="left:666.5px;top:280px"></div>
<div class="adn" style="left:666.5px;top:305px"></div>
<div class="spin" style="left:650px;top:286px;width:44px;height:18px;line-height:17px">0.0</div>
<svg style="position:absolute;left:747.0px;top:154.0px" width="26" height="28" viewBox="0 0 26 28"><ellipse cx="13.0" cy="21.5" rx="8.5" ry="2.6" fill="#000" opacity="0.3" filter="url(#shb)"/><circle cx="13.0" cy="13.0" r="9" fill="#f2f2f2" stroke="#bdb9b5" stroke-width="0.6" stroke-opacity="0.6"/><circle cx="13.0" cy="13.0" r="7.4" fill="url(#g_teal)"/><ellipse cx="13.0" cy="9.4" rx="5.3" ry="3.3" fill="url(#g_hl)"/><text x="13.0" y="17.2" text-anchor="middle" font-family="Liberation Sans" font-size="12" fill="#e8f0f0">x</text></svg>
<svg style="position:absolute;left:822.0px;top:154.0px" width="26" height="28" viewBox="0 0 26 28"><ellipse cx="13.0" cy="21.5" rx="8.5" ry="2.6" fill="#000" opacity="0.3" filter="url(#shb)"/><circle cx="13.0" cy="13.0" r="9" fill="#f2f2f2" stroke="#bdb9b5" stroke-width="0.6" stroke-opacity="0.6"/><circle cx="13.0" cy="13.0" r="7.4" fill="url(#g_teal)"/><ellipse cx="13.0" cy="9.4" rx="5.3" ry="3.3" fill="url(#g_hl)"/><text x="13.0" y="17.2" text-anchor="middle" font-family="Liberation Sans" font-size="12" fill="#e8f0f0">y</text></svg>
<svg style="position:absolute;left:872.0px;top:154.0px" width="26" height="28" viewBox="0 0 26 28"><ellipse cx="13.0" cy="21.5" rx="8.5" ry="2.6" fill="#000" opacity="0.3" filter="url(#shb)"/><circle cx="13.0" cy="13.0" r="9" fill="#f2f2f2" stroke="#bdb9b5" stroke-width="0.6" stroke-opacity="0.6"/><circle cx="13.0" cy="13.0" r="7.4" fill="url(#g_teal)"/><ellipse cx="13.0" cy="9.4" rx="5.3" ry="3.3" fill="url(#g_hl)"/><text x="13.0" y="17.2" text-anchor="middle" font-family="Liberation Sans" font-size="12" fill="#e8f0f0">z</text></svg>
<div class="hgroove" style="left:719px;top:261.8px;width:82px"></div>
<div class="handle" style="left:752px;top:257.3px"></div>
<div class="vgroove" style="left:832.3px;top:187px;height:83px"></div>
<div class="handle" style="left:827.8px;top:221.2px"></div>
<div class="vgroove" style="left:882.5px;top:187px;height:83px"></div>
<div class="handle" style="left:878px;top:221.2px"></div>
<div class="aup" style="left:754.5px;top:280px"></div>
<div class="adn" style="left:754.5px;top:305px"></div>
<div class="spin" style="left:738px;top:286px;width:44px;height:18px;line-height:17px">0.0</div>
<div class="aup" style="left:829.5px;top:280px"></div>
<div class="adn" style="left:829.5px;top:305px"></div>
<div class="spin" style="left:813px;top:286px;width:44px;height:18px;line-height:17px">0.0</div>
<div class="aup" style="left:879.5px;top:280px"></div>
<div class="adn" style="left:879.5px;top:305px"></div>
<div class="spin" style="left:863px;top:286px;width:44px;height:18px;line-height:17px">0.0</div>
<svg style="position:absolute;left:471.0px;top:342.0px" width="26" height="28" viewBox="0 0 26 28"><ellipse cx="13.0" cy="21.5" rx="8.5" ry="2.6" fill="#000" opacity="0.3" filter="url(#shb)"/><circle cx="13.0" cy="13.0" r="9" fill="#f2f2f2" stroke="#bdb9b5" stroke-width="0.6" stroke-opacity="0.6"/><circle cx="13.0" cy="13.0" r="7.4" fill="url(#g_teal)"/><ellipse cx="13.0" cy="9.4" rx="5.3" ry="3.3" fill="url(#g_hl)"/><text x="13.0" y="17.2" text-anchor="middle" font-family="Liberation Sans" font-size="12" fill="#e8f0f0">x</text></svg>
<svg style="position:absolute;left:546.0px;top:342.0px" width="26" height="28" viewBox="0 0 26 28"><ellipse cx="13.0" cy="21.5" rx="8.5" ry="2.6" fill="#000" opacity="0.3" filter="url(#shb)"/><circle cx="13.0" cy="13.0" r="9" fill="#f2f2f2" stroke="#bdb9b5" stroke-width="0.6" stroke-opacity="0.6"/><circle cx="13.0" cy="13.0" r="7.4" fill="url(#g_teal)"/><ellipse cx="13.0" cy="9.4" rx="5.3" ry="3.3" fill="url(#g_hl)"/><text x="13.0" y="17.2" text-anchor="middle" font-family="Liberation Sans" font-size="12" fill="#e8f0f0">y</text></svg>
<svg style="position:absolute;left:596.0px;top:342.0px" width="26" height="28" viewBox="0 0 26 28"><ellipse cx="13.0" cy="21.5" rx="8.5" ry="2.6" fill="#000" opacity="0.3" filter="url(#shb)"/><circle cx="13.0" cy="13.0" r="9" fill="#f2f2f2" stroke="#bdb9b5" stroke-width="0.6" stroke-opacity="0.6"/><circle cx="13.0" cy="13.0" r="7.4" fill="url(#g_teal)"/><ellipse cx="13.0" cy="9.4" rx="5.3" ry="3.3" fill="url(#g_hl)"/><text x="13.0" y="17.2" text-anchor="middle" font-family="Liberation Sans" font-size="12" fill="#e8f0f0">z</text></svg>
<div class="hgroove" style="left:443px;top:449.9px;width:82px"></div>
<div class="handle" style="left:457px;top:445.4px"></div>
<div class="vgroove" style="left:556.1px;top:375px;height:83px"></div>
<div class="handle" style="left:551.6px;top:392.5px"></div>
<div class="vgroove" style="left:606.4px;top:375px;height:83px"></div>
<div class="handle" style="left:601.9px;top:446.3px"></div>
<div class="aup" style="left:478.5px;top:468px"></div>
<div class="adn" style="left:478.5px;top:493px"></div>
<div class="spin" style="left:462px;top:474px;width:44px;height:18px;line-height:17px">-6.0</div>
<div class="aup" style="left:553.5px;top:468px"></div>
<div class="adn" style="left:553.5px;top:493px"></div>
<div class="spin" style="left:537px;top:474px;width:44px;height:18px;line-height:17px">-5.0</div>
<div class="aup" style="left:603.5px;top:468px"></div>
<div class="adn" style="left:603.5px;top:493px"></div>
<div class="spin" style="left:587px;top:474px;width:44px;height:18px;line-height:17px">-10.0</div>
<svg style="position:absolute;left:659.0px;top:342.0px" width="26" height="28" viewBox="0 0 26 28"><ellipse cx="13.0" cy="21.5" rx="8.5" ry="2.6" fill="#000" opacity="0.3" filter="url(#shb)"/><circle cx="13.0" cy="13.0" r="9" fill="#f2f2f2" stroke="#bdb9b5" stroke-width="0.6" stroke-opacity="0.6"/><circle cx="13.0" cy="13.0" r="7.4" fill="url(#g_olive)"/></svg>
<div class="vgroove" style="left:669.0px;top:375px;height:83px"></div>
<div class="handle" style="left:664.5px;top:442.7px"></div>
<div class="aup" style="left:666.5px;top:468px"></div>
<div class="adn" style="left:666.5px;top:493px"></div>
<div class="spin" style="left:650px;top:474px;width:44px;height:18px;line-height:17px">0.1</div>
<svg style="position:absolute;left:722.3px;top:342.0px" width="26" height="28" viewBox="0 0 26 28"><ellipse cx="13.0" cy="21.5" rx="8.5" ry="2.6" fill="#000" opacity="0.3" filter="url(#shb)"/><circle cx="13.0" cy="13.0" r="9" fill="#f2f2f2" stroke="#bdb9b5" stroke-width="0.6" stroke-opacity="0.6"/><circle cx="13.0" cy="13.0" r="7.4" fill="url(#g_red)"/><ellipse cx="13.0" cy="9.4" rx="5.3" ry="3.3" fill="url(#g_hl)"/><text x="13.0" y="17.2" text-anchor="middle" font-family="Liberation Serif" font-size="12" fill="#e8f0f0">R</text></svg>
<div class="vgroove" style="left:732.8px;top:375px;height:83px"></div>
<div class="handle" style="left:728.3px;top:373.5px"></div>
<svg style="position:absolute;left:772.0px;top:342.0px" width="26" height="28" viewBox="0 0 26 28"><ellipse cx="13.0" cy="21.5" rx="8.5" ry="2.6" fill="#000" opacity="0.3" filter="url(#shb)"/><circle cx="13.0" cy="13.0" r="9" fill="#f2f2f2" stroke="#bdb9b5" stroke-width="0.6" stroke-opacity="0.6"/><circle cx="13.0" cy="13.0" r="7.4" fill="url(#g_green)"/><ellipse cx="13.0" cy="9.4" rx="5.3" ry="3.3" fill="url(#g_hl)"/><text x="13.0" y="17.2" text-anchor="middle" font-family="Liberation Serif" font-size="12" fill="#e8f0f0">G</text></svg>
<div class="vgroove" style="left:782.5px;top:375px;height:83px"></div>
<div class="handle" style="left:778px;top:373.5px"></div>
<svg style="position:absolute;left:821.8px;top:342.0px" width="26" height="28" viewBox="0 0 26 28"><ellipse cx="13.0" cy="21.5" rx="8.5" ry="2.6" fill="#000" opacity="0.3" filter="url(#shb)"/><circle cx="13.0" cy="13.0" r="9" fill="#f2f2f2" stroke="#bdb9b5" stroke-width="0.6" stroke-opacity="0.6"/><circle cx="13.0" cy="13.0" r="7.4" fill="url(#g_blue)"/><ellipse cx="13.0" cy="9.4" rx="5.3" ry="3.3" fill="url(#g_hl)"/><text x="13.0" y="17.2" text-anchor="middle" font-family="Liberation Serif" font-size="12" fill="#e8f0f0">B</text></svg>
<div class="vgroove" style="left:832.3px;top:375px;height:83px"></div>
<div class="handle" style="left:827.8px;top:373.5px"></div>
<svg style="position:absolute;left:871.5px;top:342.0px" width="26" height="28" viewBox="0 0 26 28"><ellipse cx="13.0" cy="21.5" rx="8.5" ry="2.6" fill="#000" opacity="0.3" filter="url(#shb)"/><circle cx="13.0" cy="13.0" r="9" fill="#f2f2f2" stroke="#bdb9b5" stroke-width="0.6" stroke-opacity="0.6"/><circle cx="13.0" cy="13.0" r="7.4" fill="url(#g_gray)"/><ellipse cx="13.0" cy="9.4" rx="5.3" ry="3.3" fill="url(#g_hl)"/><text x="13.0" y="17.2" text-anchor="middle" font-family="Liberation Serif" font-size="12" fill="#e8f0f0">A</text></svg>
<div class="vgroove" style="left:882.0px;top:375px;height:83px"></div>
<div class="handle" style="left:877.5px;top:373.5px"></div>
<div class="aup" style="left:729.5px;top:468px"></div>
<div class="adn" style="left:729.5px;top:493px"></div>
<div class="spin" style="left:713px;top:474px;width:44px;height:18px;line-height:17px">255.0</div>
<div class="aup" style="left:779.5px;top:468px"></div>
<div class="adn" style="left:779.5px;top:493px"></div>
<div class="spin" style="left:763px;top:474px;width:44px;height:18px;line-height:17px">255.0</div>
<div class="aup" style="left:829.5px;top:468px"></div>
<div class="adn" style="left:829.5px;top:493px"></div>
<div class="spin" style="left:813px;top:474px;width:44px;height:18px;line-height:17px">255.0</div>
<div class="aup" style="left:879.5px;top:468px"></div>
<div class="adn" style="left:879.5px;top:493px"></div>
<div class="spin" style="left:863px;top:474px;width:44px;height:18px;line-height:17px">255.0</div>
<div style="position:absolute;left:710px;top:500px;width:200px;height:20px;background:#fff;"></div>
<svg style="position:absolute;left:434.3px;top:537.3px" width="26" height="28" viewBox="0 0 26 28"><ellipse cx="13.0" cy="21.5" rx="8.5" ry="2.6" fill="#000" opacity="0.3" filter="url(#shb)"/><circle cx="13.0" cy="13.0" r="9" fill="#f2f2f2" stroke="#bdb9b5" stroke-width="0.6" stroke-opacity="0.6"/><circle cx="13.0" cy="13.0" r="7.4" fill="url(#g_hue)"/><path d="M10.2 8.5 L10.2 17 M15.8 8.5 L15.8 17 M10.2 12.5 L15.8 12.5" stroke="#f4f0d8" stroke-width="1.3" fill="none"/></svg>
<div class="hgroove" style="left:468px;top:548.7px;width:155px"></div>
<div class="handle" style="left:538.5px;top:544.2px"></div>
<div style="position:absolute;left:632px;top:545px;width:0;height:0;border-top:6px solid transparent;border-bottom:6px solid transparent;border-right:6.5px solid #474747"></div>
<div style="position:absolute;left:689px;top:545px;width:0;height:0;border-top:6px solid transparent;border-bottom:6px solid transparent;border-left:6.5px solid #474747"></div>
<div class="spin" style="left:642px;top:542px;width:44px;height:18px;line-height:17px">0.0</div>
<svg style="position:absolute;left:446.0px;top:599.0px" width="26" height="28" viewBox="0 0 26 28"><ellipse cx="13.0" cy="21.5" rx="8.5" ry="2.6" fill="#000" opacity="0.3" filter="url(#shb)"/><circle cx="13.0" cy="13.0" r="9" fill="#f2f2f2" stroke="#bdb9b5" stroke-width="0.6" stroke-opacity="0.6"/><circle cx="13.0" cy="13.0" r="7.4" fill="url(#g_mblue)"/><ellipse cx="13.0" cy="9.4" rx="5.3" ry="3.3" fill="url(#g_hl)"/><ellipse cx="13.0" cy="9" rx="4.5" ry="3" fill="#fff" opacity="0.9"/></svg>
<svg style="position:absolute;left:496.0px;top:599.0px" width="26" height="28" viewBox="0 0 26 28"><ellipse cx="13.0" cy="21.5" rx="8.5" ry="2.6" fill="#000" opacity="0.3" filter="url(#shb)"/><circle cx="13.0" cy="13.0" r="9" fill="#f2f2f2" stroke="#bdb9b5" stroke-width="0.6" stroke-opacity="0.6"/><circle cx="13.0" cy="13.0" r="7.4" fill="url(#g_mpurple)"/><ellipse cx="13.0" cy="9.4" rx="5.3" ry="3.3" fill="url(#g_hl)"/><ellipse cx="13.0" cy="13.0" rx="5" ry="3.6" transform="rotate(-35 13.0 13.0)" fill="#3aa830" stroke="#c8e0c0" stroke-width="0.8"/></svg>
<svg style="position:absolute;left:546.0px;top:599.0px" width="26" height="28" viewBox="0 0 26 28"><ellipse cx="13.0" cy="21.5" rx="8.5" ry="2.6" fill="#000" opacity="0.3" filter="url(#shb)"/><circle cx="13.0" cy="13.0" r="9" fill="#f2f2f2" stroke="#bdb9b5" stroke-width="0.6" stroke-opacity="0.6"/><circle cx="13.0" cy="13.0" r="7.4" fill="url(#g_myellow)"/><ellipse cx="13.0" cy="9.4" rx="5.3" ry="3.3" fill="url(#g_hl)"/></svg>
<div class="vgroove" style="left:456.4px;top:632px;height:83px"></div>
<div class="handle" style="left:451.9px;top:666.6px"></div>
<div class="vgroove" style="left:506.5px;top:632px;height:83px"></div>
<div class="handle" style="left:502px;top:703.5px"></div>
<div class="vgroove" style="left:556.2px;top:632px;height:83px"></div>
<div class="handle" style="left:551.7px;top:703.5px"></div>
<div class="aup" style="left:453.5px;top:725px"></div>
<div class="adn" style="left:453.5px;top:750px"></div>
<div class="spin" style="left:437px;top:731px;width:44px;height:18px;line-height:17px">0.5</div>
<div class="aup" style="left:503.5px;top:725px"></div>
<div class="adn" style="left:503.5px;top:750px"></div>
<div class="spin" style="left:487px;top:731px;width:44px;height:18px;line-height:17px">0.0</div>
<div class="aup" style="left:553.5px;top:725px"></div>
<div class="adn" style="left:553.5px;top:750px"></div>
<div class="spin" style="left:537px;top:731px;width:44px;height:18px;line-height:17px">0.0</div>
<div class="chk" style="left:602px;top:608.9px"></div>
<div class="t" style="left:380.55px;top:608.4px;width:300px;text-align:right;font-size:11.5px;line-height:14px;letter-spacing:0.55px;">Front:</div>
<div class="le" style="left:689px;top:606.4px;width:193px;height:19px"></div>
<svg style="position:absolute;left:887px;top:604.4px" width="22" height="24" viewBox="0 0 22 24"><ellipse cx="10.5" cy="17.8" rx="8" ry="2.3" fill="#000" opacity="0.16" filter="url(#shb)"/><circle cx="10.5" cy="10.5" r="7.3" fill="url(#g_btn)" stroke="#dad8d6" stroke-width="1"/><g fill="#ebe9e7"><rect x="5.5" y="9.5" width="2" height="2"/><rect x="9.5" y="9.5" width="2" height="2"/><rect x="13.5" y="9.5" width="2" height="2"/></g></svg>
<div class="chk" style="left:602px;top:634.9px"></div>
<div class="t" style="left:380.55px;top:634.4px;width:300px;text-align:right;font-size:11.5px;line-height:14px;letter-spacing:0.55px;">Left:</div>
<div class="le" style="left:689px;top:632.4px;width:193px;height:19px"></div>
<svg style="position:absolute;left:887px;top:630.4px" width="22" height="24" viewBox="0 0 22 24"><ellipse cx="10.5" cy="17.8" rx="8" ry="2.3" fill="#000" opacity="0.16" filter="url(#shb)"/><circle cx="10.5" cy="10.5" r="7.3" fill="url(#g_btn)" stroke="#dad8d6" stroke-width="1"/><g fill="#ebe9e7"><rect x="5.5" y="9.5" width="2" height="2"/><rect x="9.5" y="9.5" width="2" height="2"/><rect x="13.5" y="9.5" width="2" height="2"/></g></svg>
<div class="chk" style="left:602px;top:660.9px"></div>
<div class="t" style="left:380.55px;top:660.4px;width:300px;text-align:right;font-size:11.5px;line-height:14px;letter-spacing:0.55px;">Upper:</div>
<div class="le" style="left:689px;top:658.4px;width:193px;height:19px"></div>
<svg style="position:absolute;left:887px;top:656.4px" width="22" height="24" viewBox="0 0 22 24"><ellipse cx="10.5" cy="17.8" rx="8" ry="2.3" fill="#000" opacity="0.16" filter="url(#shb)"/><circle cx="10.5" cy="10.5" r="7.3" fill="url(#g_btn)" stroke="#dad8d6" stroke-width="1"/><g fill="#ebe9e7"><rect x="5.5" y="9.5" width="2" height="2"/><rect x="9.5" y="9.5" width="2" height="2"/><rect x="13.5" y="9.5" width="2" height="2"/></g></svg>
<div class="chk" style="left:602px;top:686.9px"></div>
<div class="t" style="left:380.55px;top:686.4px;width:300px;text-align:right;font-size:11.5px;line-height:14px;letter-spacing:0.55px;">Back:</div>
<div class="le" style="left:689px;top:684.4px;width:193px;height:19px"></div>
<svg style="position:absolute;left:887px;top:682.4px" width="22" height="24" viewBox="0 0 22 24"><ellipse cx="10.5" cy="17.8" rx="8" ry="2.3" fill="#000" opacity="0.16" filter="url(#shb)"/><circle cx="10.5" cy="10.5" r="7.3" fill="url(#g_btn)" stroke="#dad8d6" stroke-width="1"/><g fill="#ebe9e7"><rect x="5.5" y="9.5" width="2" height="2"/><rect x="9.5" y="9.5" width="2" height="2"/><rect x="13.5" y="9.5" width="2" height="2"/></g></svg>
<div class="chk" style="left:602px;top:712.9px"></div>
<div class="t" style="left:380.55px;top:712.4px;width:300px;text-align:right;font-size:11.5px;line-height:14px;letter-spacing:0.55px;">Right:</div>
<div class="le" style="left:689px;top:710.4px;width:193px;height:19px"></div>
<svg style="position:absolute;left:887px;top:708.4px" width="22" height="24" viewBox="0 0 22 24"><ellipse cx="10.5" cy="17.8" rx="8" ry="2.3" fill="#000" opacity="0.16" filter="url(#shb)"/><circle cx="10.5" cy="10.5" r="7.3" fill="url(#g_btn)" stroke="#dad8d6" stroke-width="1"/><g fill="#ebe9e7"><rect x="5.5" y="9.5" width="2" height="2"/><rect x="9.5" y="9.5" width="2" height="2"/><rect x="13.5" y="9.5" width="2" height="2"/></g></svg>
<div class="chk" style="left:602px;top:738.9px"></div>
<div class="t" style="left:380.55px;top:738.4px;width:300px;text-align:right;font-size:11.5px;line-height:14px;letter-spacing:0.55px;">Lower:</div>
<div class="le" style="left:689px;top:736.4px;width:193px;height:19px"></div>
<svg style="position:absolute;left:887px;top:734.4px" width="22" height="24" viewBox="0 0 22 24"><ellipse cx="10.5" cy="17.8" rx="8" ry="2.3" fill="#000" opacity="0.16" filter="url(#shb)"/><circle cx="10.5" cy="10.5" r="7.3" fill="url(#g_btn)" stroke="#dad8d6" stroke-width="1"/><g fill="#ebe9e7"><rect x="5.5" y="9.5" width="2" height="2"/><rect x="9.5" y="9.5" width="2" height="2"/><rect x="13.5" y="9.5" width="2" height="2"/></g></svg>
</body></html>
